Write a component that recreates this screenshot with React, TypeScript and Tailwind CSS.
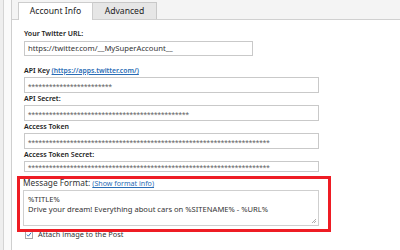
import React from "react";

function Stars({ n }: { n: number }) {
  return (
    <span className="font-['Liberation_Sans',sans-serif] text-[9px] leading-none text-[#666] tracking-[0px] translate-y-[2px] inline-block">
      {"*".repeat(n)}
    </span>
  );
}

export default function App() {
  return (
    <div className="relative flex w-[400px] h-[250px] overflow-hidden bg-white font-['Noto_Sans',sans-serif] text-[#222]">
      {/* left frame */}
      <div className="flex h-full shrink-0">
        <div className="w-[3px] bg-[#eeeeee]" />
        <div className="w-[1px] bg-[#d4d4d4]" />
        <div className="w-[7px] bg-[#fafafa]" />
        <div className="w-[1px] bg-[#cfcfcf]" />
      </div>

      <div className="flex flex-col flex-1">
        {/* tab bar */}
        <div className="flex items-end h-[20px] bg-[#f4f4f4] border-b border-[#d0d0d0] pl-[6px]">
          <div className="flex items-center justify-center w-[75px] h-[18px] -mb-px bg-white border-l border-t border-r border-[#cdcdcd] text-[8.6px] text-[#222] pb-[1px]">
            Account Info
          </div>
          <div className="flex items-center justify-center w-[64px] h-[17px] bg-[#e6e6e6] border-t border-r border-[#c8c8c8] text-[8.6px] text-[#222]">
            Advanced
          </div>
        </div>

        {/* content */}
        <div className="flex flex-col pl-[12px] pt-[8px]">
          <div className="h-[13px] flex items-center text-[7px] font-semibold">Your Twitter URL:</div>
          <div className="w-[229px] h-[15px] border border-[#c9c9c9] flex items-center pl-[3px] text-[7.7px] text-[#333]">
            https://twitter.com/__MySuperAccount__
          </div>

          <div className="mt-[9px] h-[12px] flex items-center text-[7px] font-semibold">
            API Key&nbsp;
            <span className="text-[#2a6db5] underline text-[6.8px]">(https://apps.twitter.com/)</span>
          </div>
          <div className="w-[295px] h-[16px] border border-[#c9c9c9] flex items-center pl-[3px]">
            <Stars n={24} />
          </div>

          <div className="h-[12px] flex items-center text-[7px] font-semibold">API Secret:</div>
          <div className="w-[295px] h-[16px] border border-[#c9c9c9] flex items-center pl-[3px]">
            <Stars n={46} />
          </div>

          <div className="h-[12px] flex items-center text-[7px] font-semibold">Access Token</div>
          <div className="w-[295px] h-[16px] border border-[#c9c9c9] flex items-center pl-[3px]">
            <Stars n={69} />
          </div>

          <div className="h-[12px] flex items-center text-[7px] font-semibold">Access Token Secret:</div>
          <div className="w-[295px] h-[11px] border border-[#c9c9c9] flex items-center pl-[3px]">
            <Stars n={69} />
          </div>

          <div className="mt-[5px] h-[13px] flex items-center text-[8.3px] text-[#333] -ml-px">
            Message Format:&nbsp;
            <span className="text-[7.1px] text-[#2a6db5] underline">(Show format info)</span>
          </div>
          <div className="relative -ml-px w-[296px] h-[36px] border border-[#cfcfcf] pl-[4px] pt-[3px] text-[7.6px] leading-[10px] text-[#333]">
            <div>%TITLE%</div>
            <div>Drive your dream! Everything about cars on %SITENAME% - %URL%</div>
            <svg className="absolute right-[1px] bottom-[1px]" width="6" height="6" viewBox="0 0 6 6">
              <path d="M5 1 L1 5 M5 3 L3 5" stroke="#999" strokeWidth="0.8" />
            </svg>
          </div>

          <div className="mt-[3px] flex items-center gap-[5px] pl-[1px]">
            <div className="w-[8px] h-[8px] border border-[#a8a8a8] bg-white flex items-center justify-center">
              <svg width="7" height="7" viewBox="0 0 8 8">
                <path d="M1.2 4.2 L3.2 6.2 L6.8 1.6" fill="none" stroke="#2a6db5" strokeWidth="1.3" />
              </svg>
            </div>
            <span className="text-[7.4px] text-[#333]">Attach image to the Post</span>
          </div>
        </div>
      </div>

      {/* red annotation box */}
      <div className="absolute left-[17px] top-[176px] w-[314px] h-[56px] border-[3px] border-[#ee1c24]" />
    </div>
  );
}
